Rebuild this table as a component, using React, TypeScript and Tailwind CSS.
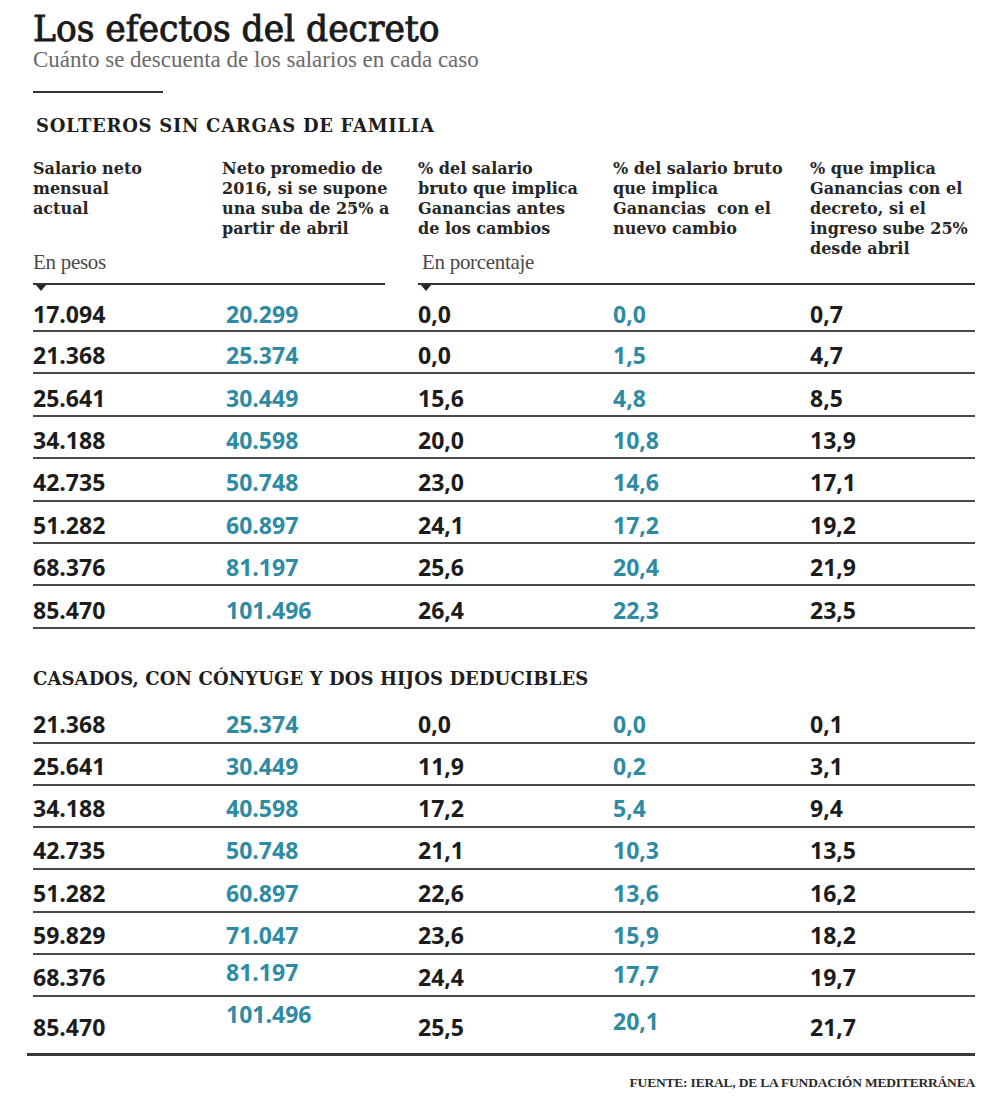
import React from "react";

type Row = [string, string, string, string, string, string?, string?];

const solteros: Row[] = [
  ["17.094", "20.299", "0,0", "0,0", "0,7"],
  ["21.368", "25.374", "0,0", "1,5", "4,7"],
  ["25.641", "30.449", "15,6", "4,8", "8,5"],
  ["34.188", "40.598", "20,0", "10,8", "13,9"],
  ["42.735", "50.748", "23,0", "14,6", "17,1"],
  ["51.282", "60.897", "24,1", "17,2", "19,2"],
  ["68.376", "81.197", "25,6", "20,4", "21,9"],
  ["85.470", "101.496", "26,4", "22,3", "23,5"],
];

const casados: Row[] = [
  ["21.368", "25.374", "0,0", "0,0", "0,1"],
  ["25.641", "30.449", "11,9", "0,2", "3,1"],
  ["34.188", "40.598", "17,2", "5,4", "9,4"],
  ["42.735", "50.748", "21,1", "10,3", "13,5"],
  ["51.282", "60.897", "22,6", "13,6", "16,2"],
  ["59.829", "71.047", "23,6", "15,9", "18,2"],
  ["68.376", "81.197", "24,4", "17,7", "19,7", "mb-[10px]", "mb-[6px]"],
  ["85.470", "101.496", "25,5", "20,1", "21,7", "mb-[26px]", "mb-[12px]"],
];

const serif = "font-['Liberation_Serif',serif]";
const slab = "font-['DejaVu_Serif',serif]";
const sans = "font-['Open_Sans',sans-serif]";

function DataRow({ r, rowClass }: { r: Row; rowClass: string }) {
  const [a, b, c, d, e, off2, off4] = r;
  return (
    <div
      className={`grid grid-cols-[189px_196px_195px_197px_1fr] items-center ${sans} text-[23px] leading-[26px] font-bold ${rowClass}`}
    >
      <span className="text-[#1c1c1c]">{a}</span>
      <span className={`pl-[4px] text-[#2f8aa3] ${off2 ?? ""}`}>{b}</span>
      <span className="text-[#1c1c1c]">{c}</span>
      <span className={`text-[#2f8aa3] ${off4 ?? ""}`}>{d}</span>
      <span className="text-[#1c1c1c]">{e}</span>
    </div>
  );
}

function Triangle() {
  return (
    <div className="h-[6px] pl-[3px]">
      <div className="w-0 h-0 border-l-[5px] border-r-[5px] border-t-[6px] border-l-transparent border-r-transparent border-t-[#222]" />
    </div>
  );
}

function Lines({ lines }: { lines: string[] }) {
  return (
    <div className={`${slab} font-bold text-[16px] leading-[20px] text-[#262626] whitespace-pre`}>
      {lines.map((l, i) => (
        <div key={i}>{l}</div>
      ))}
    </div>
  );
}

export default function App() {
  return (
    <div className="w-[1000px] h-[1110px] bg-white pl-[33px] pr-[25px] pt-[11px] overflow-hidden">
      <h1
        className={`${slab} text-[34.5px] leading-[36px] text-[#1a1a1a] [-webkit-text-stroke:0.9px_#1a1a1a]`}
      >
        Los efectos del decreto
      </h1>
      <p className={`${serif} mt-[2px] text-[23px] leading-[22px] text-[#6a6a6a]`}>
        Cuánto se descuenta de los salarios en cada caso
      </p>
      <div className="mt-[20px] w-[130px] h-[2px] bg-[#333]" />

      <h2
        className={`${slab} mt-[23px] ml-[3px] font-bold text-[18px] leading-[20px] tracking-[0.7px] text-[#1e1e1e]`}
      >
        SOLTEROS SIN CARGAS DE FAMILIA
      </h2>

      {/* Header */}
      <div className="mt-[23px] flex gap-[33px]">
        <div className="w-[352px]">
          <div className="grid grid-cols-[189px_1fr] border-b-2 border-[#333] pb-[9px]">
            <Lines lines={["Salario neto", "mensual", "actual"]} />
            <Lines
              lines={[
                "Neto promedio de",
                "2016, si se supone",
                "una suba de 25% a",
                "partir de abril",
              ]}
            />
            <div className={`${serif} mt-[11px] text-[21px] leading-[24px] text-[#4a4a4a] tracking-[-0.3px]`}>
              En pesos
            </div>
          </div>
          <Triangle />
        </div>
        <div className="flex-1">
          <div className="grid grid-cols-[195px_197px_1fr] border-b-2 border-[#333] pb-[9px]">
            <Lines
              lines={["% del salario", "bruto que implica", "Ganancias antes", "de los cambios"]}
            />
            <Lines
              lines={["% del salario bruto", "que implica", "Ganancias  con el", "nuevo cambio"]}
            />
            <div className="row-span-2">
              <Lines
                lines={[
                  "% que implica",
                  "Ganancias con el",
                  "decreto, si el",
                  "ingreso sube 25%",
                  "desde abril",
                ]}
              />
            </div>
            <div className={`${serif} mt-[11px] pl-[4px] text-[21px] leading-[24px] text-[#4a4a4a] tracking-[-0.3px]`}>
              En porcentaje
            </div>
          </div>
          <Triangle />
        </div>
      </div>

      {/* Solteros rows */}
      <div>
        {solteros.map((r, i) => (
          <DataRow
            key={i}
            r={r}
            rowClass={`border-b-2 border-[#4a4a4a] ${
              i === 0 ? "h-[41px] pt-[7px]" : "h-[42.4px] pt-[6px]"
            }`}
          />
        ))}
      </div>

      <h2
        className={`${slab} mt-[40px] font-bold text-[18px] leading-[20px] tracking-[0.1px] text-[#1e1e1e]`}
      >
        CASADOS, CON CÓNYUGE Y DOS HIJOS DEDUCIBLES
      </h2>

      <div className="mt-[13px]">
        {casados.map((r, i) => (
          <DataRow
            key={i}
            r={r}
            rowClass={
              i === casados.length - 1
                ? "h-[42.2px] pt-[4px]"
                : "h-[42.2px] pt-[4px] border-b-2 border-[#4a4a4a]"
            }
          />
        ))}
      </div>

      <div className="mt-[14px] -ml-[6px] h-[3px] bg-[#3a3a3a]" />

      <div
        className={`${serif} mt-[19px] text-right font-bold text-[13.5px] leading-[16px] tracking-[-0.2px] text-[#2a2a2a]`}
      >
        FUENTE: IERAL, DE LA FUNDACIÓN MEDITERRÁNEA
      </div>
    </div>
  );
}
